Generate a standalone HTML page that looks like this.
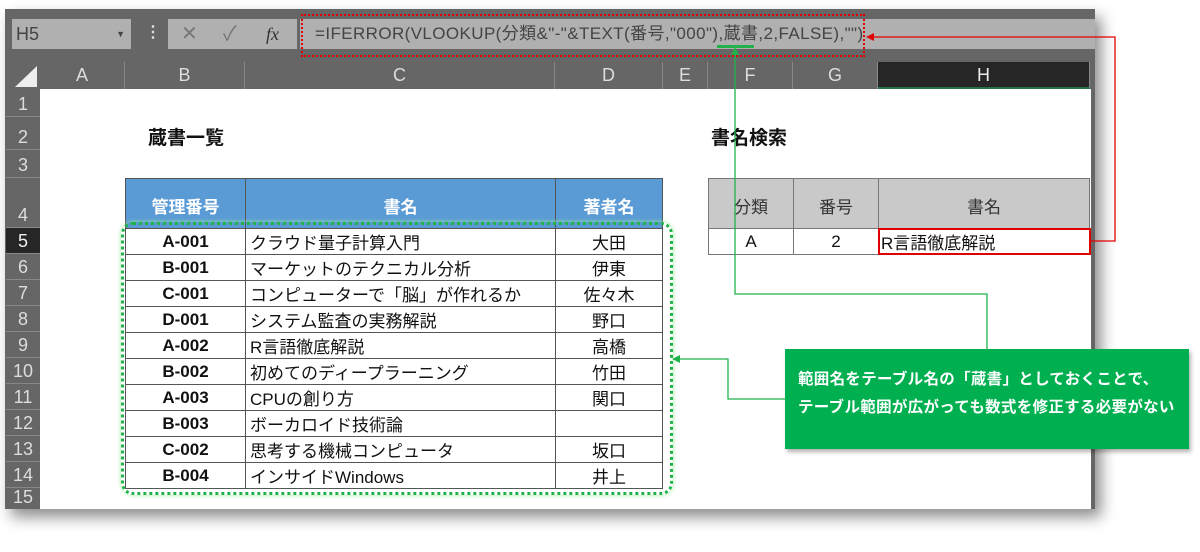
<!DOCTYPE html><html><head><meta charset="utf-8"><style>
*{margin:0;padding:0;box-sizing:border-box}
body{width:1200px;height:552px;background:#fff;position:relative;overflow:hidden;font-family:"Liberation Sans","Noto Sans CJK JP",sans-serif}
.a{position:absolute}
.frame{left:5px;top:9px;width:1090px;height:500px;background:#666;box-shadow:6px 8px 14px rgba(0,0,0,.45)}
.ch{position:absolute;top:62px;height:27px;color:#ddd;font-size:18px;text-align:center;line-height:27px;border-right:1px solid #888;background:#666}
.rh{position:absolute;left:6px;width:34px;color:#ddd;font-size:18px;text-align:center;border-bottom:1px solid #888;background:#666;display:flex;align-items:flex-end;justify-content:center;padding-bottom:1px}
.grid{left:40px;top:89px;width:1051px;height:420px;background:#fff}
table{border-collapse:collapse;position:absolute;font-size:17px}
td{border:1px solid #555;height:26px;padding:0 4px;color:#111}
.t1 th{background:#5b9bd5;color:#fff;height:50px;border:1px solid #555;font-size:17px;padding-top:4px}
.t2 th{background:#c9c9c9;color:#333;height:50px;border:1px solid #777;font-weight:normal;font-size:17px;padding-top:4px}
.t2 td{border-color:#777}
</style></head><body>
<div class="a frame"></div>
<div class="a" style="left:12px;top:19px;width:119px;height:30px;background:#b0b0b0;color:#444;font-size:18px;line-height:30px;padding-left:4px">H5<span style="position:absolute;right:6px;top:0;font-size:9px">▼</span></div>
<div class="a" style="left:145px;top:22px;color:#ddd;font-size:16px;font-weight:bold">⋮</div>
<div class="a" style="left:168px;top:19px;width:129px;height:30px;background:#b0b0b0;color:#777;font-size:20px;line-height:30px"><span class="a" style="left:13px">✕</span><span class="a" style="left:55px">✓</span><span class="a" style="left:98px;font-family:'Liberation Serif',serif;font-style:italic;color:#333;font-size:18px">fx</span></div>
<div class="a" style="left:300px;top:19px;width:795px;height:30px;background:#b0b0b0"></div>
<div class="a" style="left:315px;top:19px;line-height:30px;font-size:17px;color:#444;white-space:nowrap;letter-spacing:0.4px">=IFERROR(VLOOKUP(分類&amp;"-"&amp;TEXT(番号,"000"),蔵書,2,FALSE),"")</div>
<div class="a" style="left:301px;top:14px;width:564px;height:43px;border:2px dotted #e00000"></div>
<div class="a" style="left:717px;top:45px;width:37px;height:3px;background:#22b24c"></div>
<div class="a" style="left:6px;top:62px;width:34px;height:27px;background:#666"></div>
<div class="a" style="left:15px;top:66px;width:0;height:0;border-left:22px solid transparent;border-bottom:21px solid #eee"></div>
<div class="ch" style="left:40px;width:85px">A</div>
<div class="ch" style="left:125px;width:120px">B</div>
<div class="ch" style="left:245px;width:310px">C</div>
<div class="ch" style="left:555px;width:108px">D</div>
<div class="ch" style="left:663px;width:45px">E</div>
<div class="ch" style="left:708px;width:85px">F</div>
<div class="ch" style="left:793px;width:85px">G</div>
<div class="ch" style="left:878px;width:212px;background:#262626;color:#eee;border-bottom:2px solid #217346">H</div>
<div class="rh" style="top:89px;height:28px">1</div>
<div class="rh" style="top:117px;height:33px">2</div>
<div class="rh" style="top:150px;height:28px">3</div>
<div class="rh" style="top:178px;height:50px">4</div>
<div class="rh" style="top:228px;height:26px;background:#262626;color:#eee">5</div>
<div class="rh" style="top:254px;height:26px">6</div>
<div class="rh" style="top:280px;height:26px">7</div>
<div class="rh" style="top:306px;height:26px">8</div>
<div class="rh" style="top:332px;height:26px">9</div>
<div class="rh" style="top:358px;height:26px">10</div>
<div class="rh" style="top:384px;height:26px">11</div>
<div class="rh" style="top:410px;height:26px">12</div>
<div class="rh" style="top:436px;height:26px">13</div>
<div class="rh" style="top:462px;height:26px">14</div>
<div class="rh" style="top:488px;height:21px;border:none">15</div>
<div class="a grid"></div>
<div class="a" style="left:148px;top:123px;font-size:19px;font-weight:bold;color:#111">蔵書一覧</div>
<div class="a" style="left:711px;top:123px;font-size:19px;font-weight:bold;color:#111">書名検索</div>
<table class="t1" style="left:125px;top:178px;width:538px">
<tr><th style="width:120px">管理番号</th><th style="width:310px">書名</th><th>著者名</th></tr>
<tr><td align=center><b>A-001</b></td><td>クラウド量子計算入門</td><td align=center>大田</td></tr>
<tr><td align=center><b>B-001</b></td><td>マーケットのテクニカル分析</td><td align=center>伊東</td></tr>
<tr><td align=center><b>C-001</b></td><td>コンピューターで「脳」が作れるか</td><td align=center>佐々木</td></tr>
<tr><td align=center><b>D-001</b></td><td>システム監査の実務解説</td><td align=center>野口</td></tr>
<tr><td align=center><b>A-002</b></td><td>R言語徹底解説</td><td align=center>高橋</td></tr>
<tr><td align=center><b>B-002</b></td><td>初めてのディープラーニング</td><td align=center>竹田</td></tr>
<tr><td align=center><b>A-003</b></td><td>CPUの創り方</td><td align=center>関口</td></tr>
<tr><td align=center><b>B-003</b></td><td>ボーカロイド技術論</td><td align=center></td></tr>
<tr><td align=center><b>C-002</b></td><td>思考する機械コンピュータ</td><td align=center>坂口</td></tr>
<tr><td align=center><b>B-004</b></td><td>インサイドWindows</td><td align=center>井上</td></tr>
</table>
<table class="t2" style="left:708px;top:178px;width:382px">
<tr><th style="width:85px">分類</th><th style="width:85px">番号</th><th>書名</th></tr>
<tr><td align=center>A</td><td align=center>2</td><td style="padding-left:2px">R言語徹底解説</td></tr>
</table>
<div class="a" style="left:878px;top:228px;width:213px;height:27px;border:2px solid #e00000"></div>
<div class="a" style="left:121px;top:222px;width:552px;height:273px;border:3px dotted #22b24c;border-radius:12px;box-shadow:0 0 4px #9e9"></div>
<svg class="a" style="left:0;top:0" width="1200" height="552">
<g fill="none" stroke="#e00000" stroke-width="1.3"><polyline points="1091,241 1115,241 1115,37 872,37"/></g>
<polygon points="866,37 874,33 874,41" fill="#e00000"/>
<g fill="none" stroke="#22b24c" stroke-width="1.3"><polyline points="735,52 735,294 987,294 987,349"/><polyline points="785,399 728,399 728,359 678,359"/></g>
<polygon points="735,47 731,55 739,55" fill="#22b24c"/>
<polygon points="672,359 680,355 680,363" fill="#22b24c"/>
</svg>
<div class="a" style="left:785px;top:349px;width:404px;height:100px;background:#00b050;box-shadow:2px 3px 4px rgba(0,0,0,.3);color:#fff;font-size:15.5px;font-weight:bold;line-height:28px;padding:17px 0 0 13px;white-space:nowrap;letter-spacing:0.3px">範囲名をテーブル名の「蔵書」としておくことで、<br>テーブル範囲が広がっても数式を修正する必要がない</div>
</body></html>
